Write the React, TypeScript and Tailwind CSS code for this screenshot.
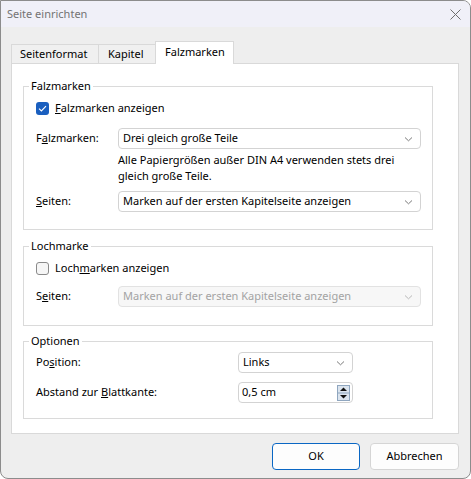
import React from "react";

const Chevron = ({ color = "#7a7a7a" }: { color?: string }) => (
  <svg width="9" height="6" viewBox="0 0 9 6" className="shrink-0">
    <path d="M1 1.5 L4.5 4.8 L8 1.5" fill="none" stroke={color} strokeWidth="1" />
  </svg>
);

const Select = ({
  value,
  className = "",
  disabled = false,
}: {
  value: string;
  className?: string;
  disabled?: boolean;
}) => (
  <div
    className={
      "h-[21px] flex items-center justify-between pl-[4px] pr-[7px] rounded-[4px] border " +
      (disabled
        ? "bg-[#f7f7f7] border-[#e2e2e2] text-[#a3a3a3] "
        : "bg-white border-[#d3d3d3] text-black ") +
      className
    }
  >
    <span className="whitespace-nowrap">{value}</span>
    <Chevron color={disabled ? "#b8b8b8" : "#7a7a7a"} />
  </div>
);

const Group = ({
  title,
  className = "",
  children,
}: {
  title: string;
  className?: string;
  children: React.ReactNode;
}) => (
  <div className={"relative w-[410px] border border-[#dadada] " + className}>
    <span className="absolute left-[5px] top-[-9px] px-[2px] bg-white leading-[16px] text-black">
      {title}
    </span>
    {children}
  </div>
);

const Check = ({ checked }: { checked: boolean }) =>
  checked ? (
    <div className="w-[13px] h-[13px] rounded-[3px] bg-[#1a5fbf] flex items-center justify-center">
      <svg width="9" height="7" viewBox="0 0 9 7">
        <path d="M1 3.6 L3.4 6 L8 1.2" fill="none" stroke="white" strokeWidth="1.1" />
      </svg>
    </div>
  ) : (
    <div className="w-[13px] h-[13px] rounded-[3px] border border-[#8a8a8a] bg-[#f6f6f6]" />
  );

export default function App() {
  return (
    <div className="w-[471px] h-[479px] bg-[#eeeeee] border border-[#8c8c8c] rounded-tr-[8px] rounded-b-[8px] overflow-hidden flex flex-col font-['Noto_Sans',sans-serif] text-[11px] text-black">
      {/* Title bar */}
      <div className="h-[26px] shrink-0 bg-[#f0f0f8] flex items-center justify-between pl-[6px] pr-[9px]">
        <span className="text-[#737373]">Seite einrichten</span>
        <svg width="11" height="11" viewBox="0 0 11 11">
          <path d="M0.5 0.5 L10.5 10.5 M10.5 0.5 L0.5 10.5" stroke="#6e6e6e" strokeWidth="1" />
        </svg>
      </div>

      <div className="pl-[10px] pr-[11px] flex flex-col">
        {/* Tabs */}
        <div className="mt-[14px] h-[23px] flex relative z-10">
          <div className="mt-[3px] w-[88px] h-[19px] bg-[#f0f0f0] border border-b-0 border-[#d9d9d9] pl-[8px] flex items-center">
            Seitenformat
          </div>
          <div className="mt-[3px] -ml-px w-[58px] h-[19px] bg-[#f0f0f0] border border-b-0 border-[#d9d9d9] pl-[9px] flex items-center">
            Kapitel
          </div>
          <div className="-ml-px w-[79px] h-[23px] bg-white border border-b-0 border-[#d9d9d9] pl-[9px] flex items-center pb-[2px]">
            Falzmarken
          </div>
        </div>

        {/* Panel */}
        <div className="-mt-px w-[448px] h-[371px] bg-white border border-[#d9d9d9] pl-[11px] flex flex-col">
          <Group title="Falzmarken" className="mt-[22px] pt-[13px] pb-[17px] pl-[12px] pr-[11px]">
            <div className="h-[16px] flex items-center gap-[6px]">
              <Check checked />
              <span>
                <u>F</u>alzmarken anzeigen
              </span>
            </div>
            <div className="mt-[12px] flex items-center">
              <span className="w-[82px]">
                F<u>a</u>lzmarken:
              </span>
              <Select value="Drei gleich große Teile" className="w-[303px]" />
            </div>
            <div className="mt-[3px] ml-[82px] leading-[16px]">
              Alle Papiergrößen außer DIN A4 verwenden stets drei
              <br />
              gleich große Teile.
            </div>
            <div className="mt-[7px] flex items-center">
              <span className="w-[82px]">
                <u>S</u>eiten:
              </span>
              <Select value="Marken auf der ersten Kapitelseite anzeigen" className="w-[303px]" />
            </div>
          </Group>

          <Group title="Lochmarke" className="mt-[16px] pt-[13px] pb-[18px] pl-[12px] pr-[11px]">
            <div className="h-[16px] flex items-center gap-[6px]">
              <Check checked={false} />
              <span>
                Loch<u>m</u>arken anzeigen
              </span>
            </div>
            <div className="mt-[10px] flex items-center">
              <span className="w-[82px]">
                S<u>e</u>iten:
              </span>
              <Select value="Marken auf der ersten Kapitelseite anzeigen" className="w-[303px]" disabled />
            </div>
          </Group>

          <Group title="Optionen" className="mt-[15px] pt-[10px] pb-[15px] pl-[12px] pr-[11px]">
            <div className="flex items-center">
              <span className="w-[202px]">
                Po<u>s</u>ition:
              </span>
              <Select value="Links" className="w-[115px]" />
            </div>
            <div className="mt-[9px] flex items-center">
              <span className="w-[202px]">
                Abstand zur <u>B</u>lattkante:
              </span>
              <div className="w-[115px] h-[21px] flex items-center justify-between pl-[3px] pr-[2px] rounded-[4px] border border-[#d3d3d3] bg-white">
                <span>0,5 cm</span>
                <svg width="13" height="16" viewBox="0 0 13 16">
                  <rect x="0.5" y="0.5" width="12" height="15" fill="#dbe4ee" stroke="#8fa6bf" />
                  <line x1="0.5" y1="8" x2="12.5" y2="8" stroke="#8fa6bf" />
                  <path d="M3 6 L6.5 2.5 L10 6 Z" fill="#111" />
                  <path d="M3 10 L6.5 13.5 L10 10 Z" fill="#111" />
                </svg>
              </div>
            </div>
          </Group>
        </div>

        {/* Buttons */}
        <div className="mt-[9px] flex justify-end gap-[10px]">
          <div className="w-[88px] h-[27px] rounded-[4px] border border-[#0a67c4] bg-[#fdfdfd] flex items-center justify-center">
            OK
          </div>
          <div className="w-[89px] h-[27px] rounded-[4px] border border-[#d5d5d5] bg-[#fdfdfd] flex items-center justify-center">
            Abbrechen
          </div>
        </div>
      </div>
    </div>
  );
}
